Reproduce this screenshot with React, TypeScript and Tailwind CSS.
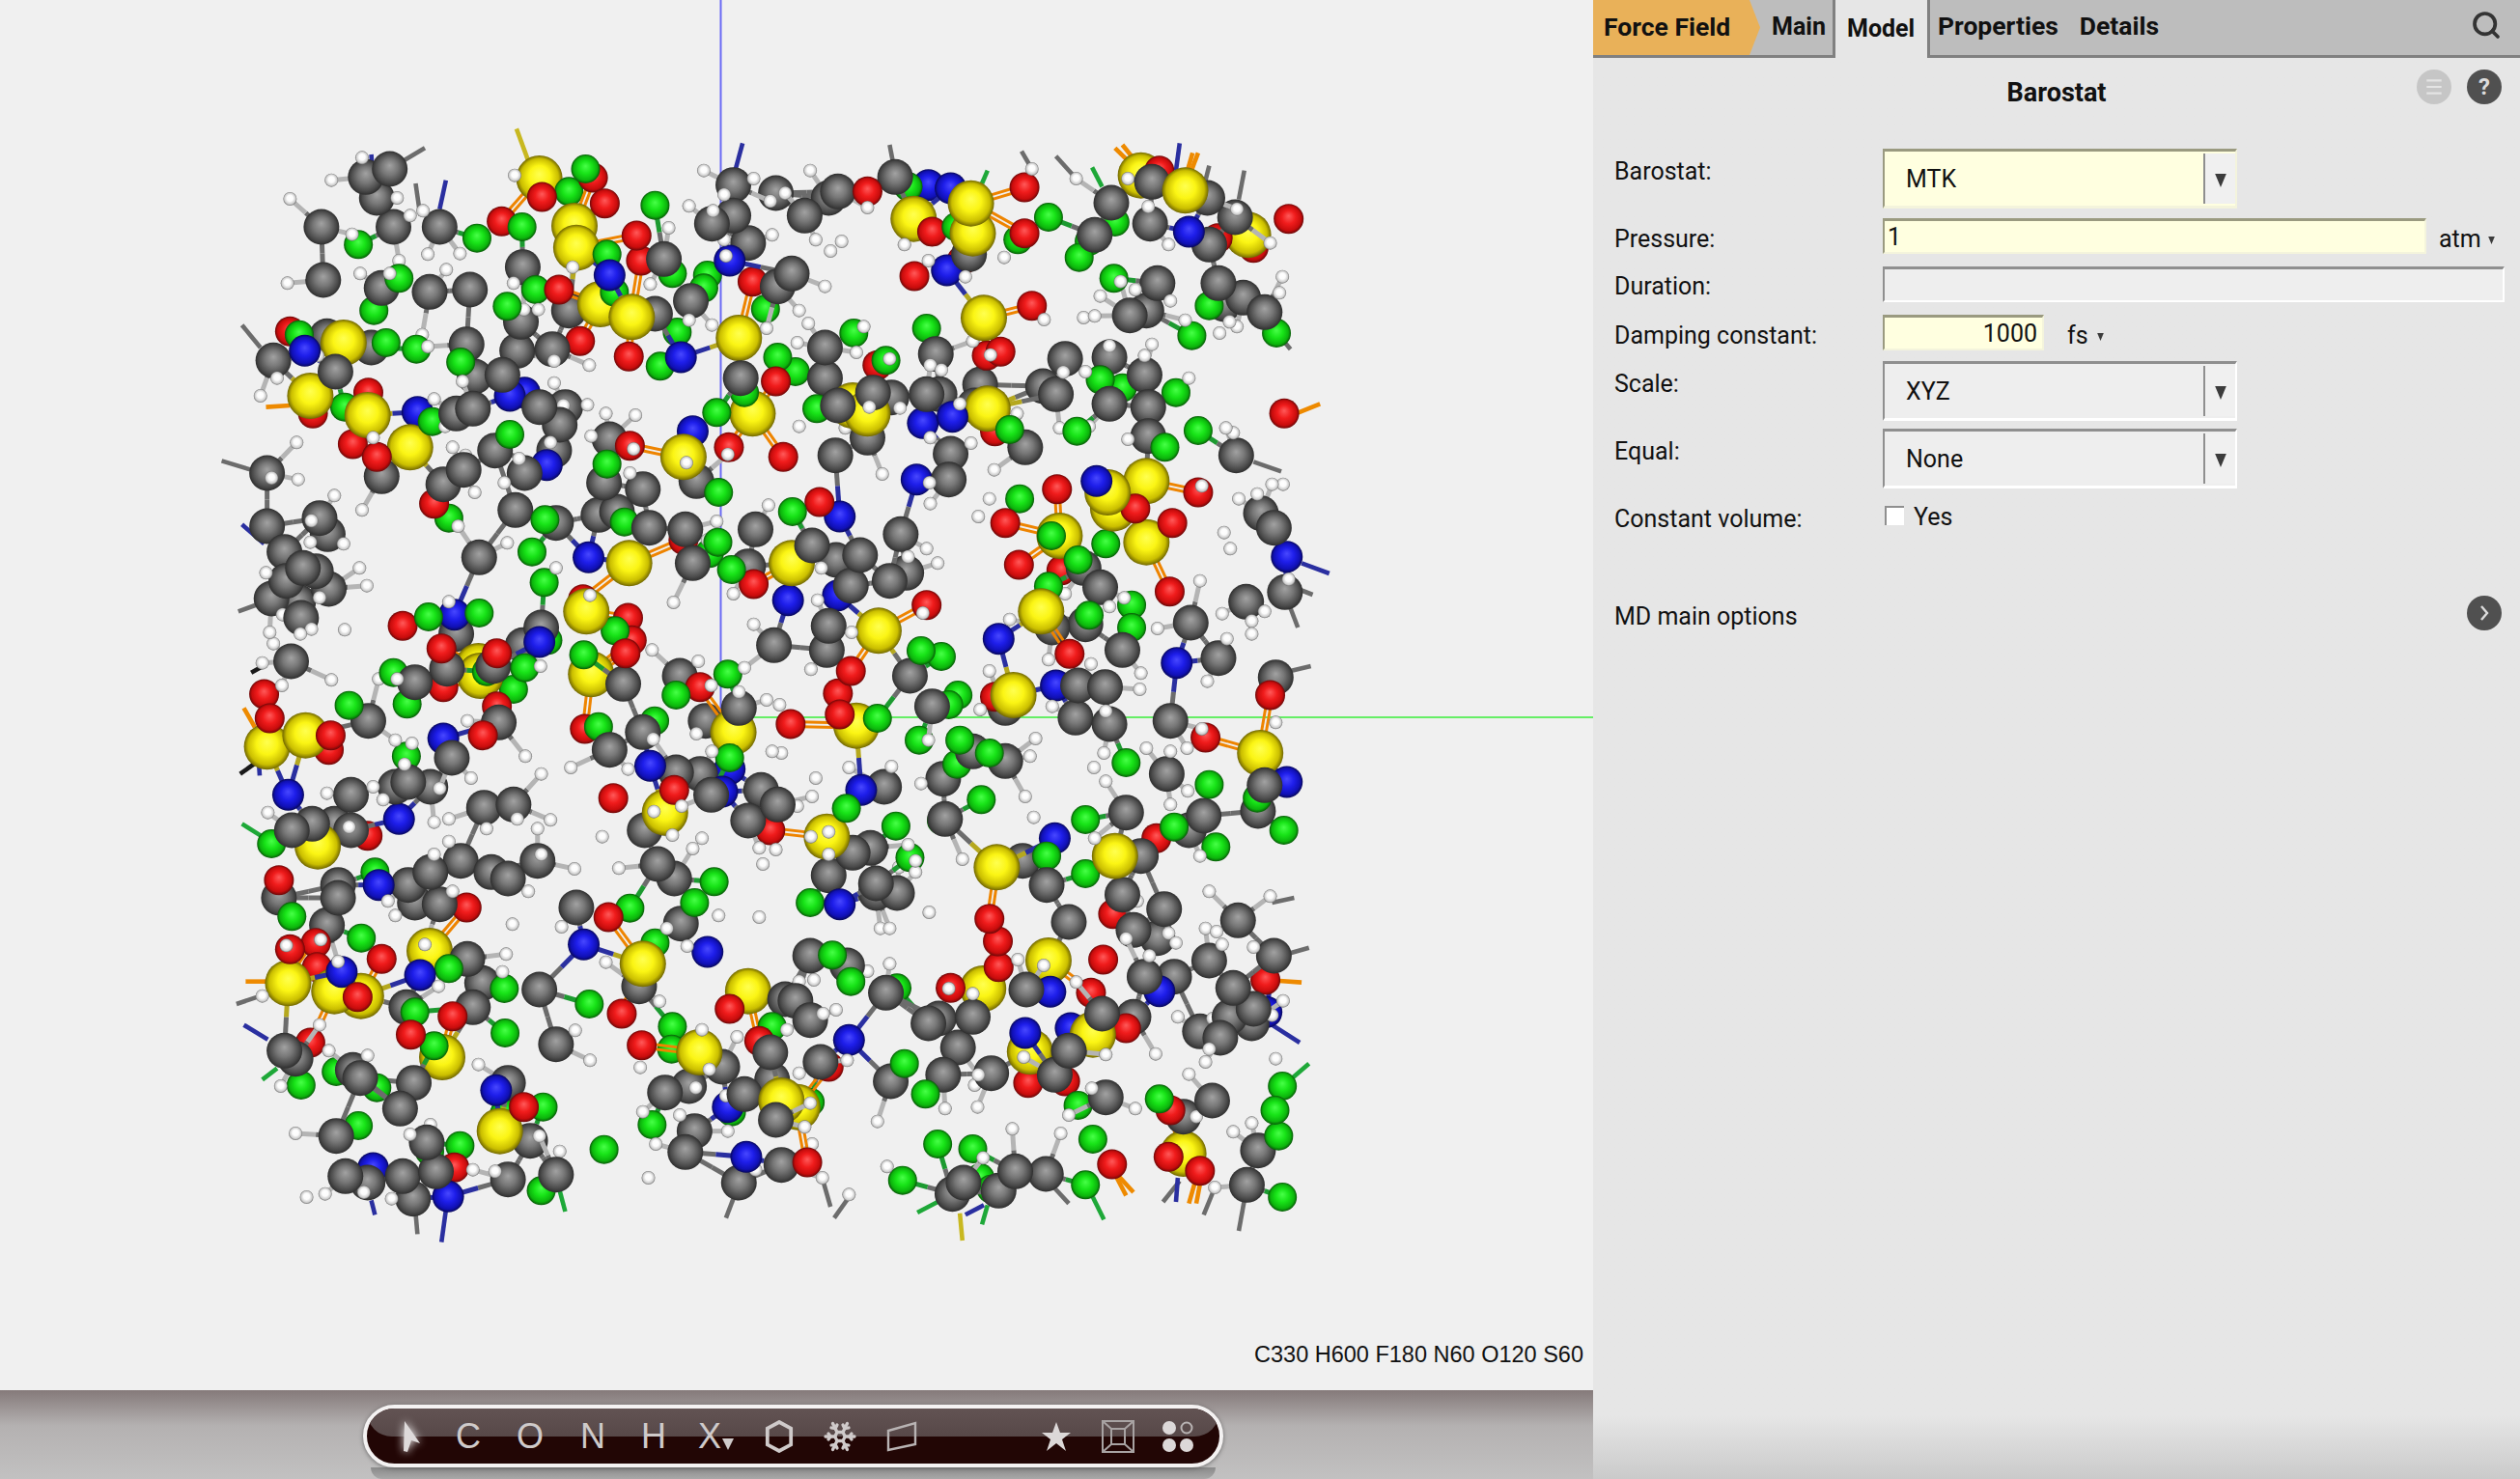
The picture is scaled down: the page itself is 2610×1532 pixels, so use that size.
import { useMemo } from 'react'
import { Search, Snowflake } from 'lucide-react'

type El = 'C' | 'F' | 'O' | 'S' | 'N' | 'H'

interface Tile {
  x: number
  y: number
  atoms: Record<El, string>
  stubs: string
}

const TILES: Tile[] = [
  {
    x: 220,
    y: 120,
    atoms: {
      C: '295,345 480,165 445,255 490,345 615,345 415,190 300,510 458,535 588,547 697,540 840,470 310,685 430,720 688,710 825,730 920,725 165,760 333,795 965,605 835,640 1222,445 1198,615 1295,575 1410,215 1352,335 1410,310 1450,395 1525,240 1530,530 660,925 705,910 710,810 785,805 885,905 955,905 940,960 925,1040 765,1040 845,1110 680,1100 625,1145 458,1120 148,1110 1075,1005 1060,1140 1165,1160 1310,1135 1430,815',
      F: '395,400 505,505 437,605 470,705 235,680 552,725 672,765 716,380 838,345 965,235 1010,165 875,540 798,592 1198,278 1068,430 1088,548 1258,672 1212,778 1340,495 1330,535 1245,490 1497,600 1530,750 1365,922 1440,860 805,990 358,905 595,950 1068,1082 1370,1170',
      O: '1030,192 1062,272 892,252 783,328 1148,372 1160,450 938,540 995,700 1127,748 1462,515 1525,825 210,670 422,860 272,925 380,1020 445,1060 1130,1025 1398,1030 1545,1060',
      S: '885,195 985,410 980,342 1050,585 1135,625 355,705 265,870 420,930 535,1030 1425,690 1462,925 1275,1060',
      N: '1075,495 250,730 555,920 805,870 845,860 905,1085 1268,750 1400,450 1300,980',
      H: '322,200 210,258 405,130 378,368 500,255 570,295 535,310 583,430 505,450 670,428 633,478 480,490 400,490 203,520 815,520 843,602 882,602 975,470 818,185 568,680 583,717 285,745 175,815 130,870 327,795 677,825 925,762 1020,775 925,830 1015,898 950,900 600,880 630,965 650,1030 685,1055 830,1065 915,1015 1065,925 1145,930 1025,995 1140,1035 1130,1110 228,1015 232,1130 330,1180 160,1125 1330,170 1290,280 1355,295 1385,245 1465,195 1235,348 1185,523 1290,635 1352,650 1500,660 1390,435 1510,265 1515,370 1550,240 1385,385 435,1000 1283,1078 1395,1052 790,1140 710,1170',
    },
    stubs: '575,100,480,165,g 823,40,855,140,y 430,120,435,210,n 632,200,615,290,n 1435,85,1415,170,n 80,650,130,720,g 25,1072,105,1100,g 550,210,560,290,g 145,905,210,900,o',
  },
  {
    x: 820,
    y: 120,
    atoms: {
      C: '100,255 125,235 280,190 35,310 865,270 970,335 1200,315 975,205 1130,400 1125,255 990,520 1155,520 915,620 960,605 1170,585 1222,565 1280,610 0,490 90,720 90,815 390,740 480,430 740,755 860,750 955,805 510,835 680,840 715,865 860,895 965,905 965,995 400,865 365,865 270,875 220,860 125,900 205,1000 118,1055 430,1050 425,1130 632,1030 1203,1055 820,370 495,900',
      F: '315,220 445,345 612,385 695,315 805,390 778,440 872,505 875,330 1130,590 1083,683 1312,675 365,660 168,675 255,760 10,795 68,910 835,820 895,845 1040,860 1100,978 590,975 772,980 1010,1030 617,1190',
      O: '205,235 630,222 380,360 630,365 332,498 460,450 1153,380 1250,410 1345,320 650,590 565,733 528,745 232,775 550,980 718,1160 1100,1170 1333,925 75,1200 995,170',
      S: '945,185 1065,232 1235,370 330,320 485,272 490,365 520,628 165,900 205,925 530,910 960,1135 855,1170',
      N: '370,215 430,225 1075,360 420,480 355,955 435,935 338,1130 825,1135 885,1170',
      H: '50,170 650,165 770,195 135,390 65,385 105,420 205,285 305,400 575,440 370,450 470,500 90,530 20,605 45,645 15,705 195,655 175,735 210,905 20,965 145,970 293,908 375,1000 455,895 580,958 610,925 265,755 375,775 405,790 490,700 538,743 683,633 735,797 795,795 860,715 975,710 955,745 1075,815 725,970 805,965 910,1005 790,627 820,622 835,560 930,540 890,515 1020,400 1205,290 1295,395 910,195 965,282 1025,575 1065,635 1158,675 1205,655 1185,640 1320,550 1328,500 1175,970 1195,985 485,1017 548,1100 245,1113 373,1140 535,1190 1110,1150 1210,1190 1260,1175 1300,1145 1330,1145',
    },
    stubs: '1050,85,1040,170,n 1225,170,1210,260,g 1350,725,1310,670,g 1085,115,1070,175,o 1100,115,1080,175,o 875,100,915,145,o 895,90,930,140,o 813,160,840,220,f 715,125,770,195,g 265,90,275,150,g 622,110,650,165,g 530,170,515,210,f 1130,155,1120,200,g 1430,895,1365,925,o 1325,1105,1250,1075,g',
  },
  {
    x: 220,
    y: 520,
    atoms: {
      C: '148,75 195,155 290,50 312,100 245,205 280,215 200,245 315,270 160,300 232,310 240,360 213,495 722,172 820,25 930,65 1045,40 1182,80 1280,85 1300,190 1470,85 1450,200 1095,30 660,410 840,445 890,390 635,518 548,560 760,510 422,680 775,685 648,795 1112,565 1265,540 1075,770 1165,715 1335,680 1425,640 1520,445 530,870 590,885 495,885 375,910 735,950 815,940 672,1115 755,1150 590,1150 880,1115 215,1020 270,1000 330,1000 375,1020 1170,1020 1255,840 1320,845 1350,910 1485,895 1450,990 1530,940 1205,1125 1250,1170 530,1190 340,1190 800,1170',
      F: '640,50 865,155 900,55 1115,62 1368,125 1405,210 1345,160 898,250 1570,30 585,357 722,345 908,430 1005,475 845,515 815,582 742,527 1395,535 490,530 527,628 370,632 1255,600 1045,698 1197,680 525,790 1400,795 160,1062 440,1150 1358,1180 1090,400',
      O: '600,5 515,385 1275,118 1465,255 1003,302 1125,360 1135,430 1118,470 620,455 625,575 770,635 140,597 155,672 320,725 315,770 732,725 1008,705 1320,575 1565,690 1085,920 1250,895 420,1037 180,1175 1510,1020 770,470',
      S: '1128,190 1012,340 720,510 725,540 1025,535 148,760 252,725 1410,715 1225,965 285,1070',
      N: '1018,172 655,350 885,435 625,735 505,985 205,910 1185,820 1400,830 1558,305 450,1190 1380,900',
      H: '418,260 398,205 355,130 268,58 405,25 265,125 145,220 315,240 290,297 190,350 155,405 165,440 238,410 268,395 358,397 135,500 322,553 188,570 798,127 930,205 665,75 1248,312 1340,118 1410,285 1365,60 1505,10 640,310 1022,290 1465,380 450,550 500,550 1190,460 1315,495 888,510 1440,515 1350,570 1425,590 1500,615 1535,630 847,790 690,680 495,740 540,750 520,815 700,858 890,845 970,825 1125,830 1193,737 1310,720 1352,775 1515,775 1540,780 435,885 310,905 462,925 615,890 600,995 825,985 640,985 742,1015 915,988 880,1015 640,1055 890,1095 980,1140 150,965 370,1010 1055,1040 1195,962 1270,945 1325,1045 1300,1077 1100,1138 1480,1075 1490,1125 1525,1080 600,1095 1245,1035',
    },
    stubs: '80,70,140,130,n 70,340,130,315,g 85,640,115,700,o 105,530,145,505,k 75,845,130,800,k 128,850,125,800,n 80,1000,135,1040,f',
  },
  {
    x: 820,
    y: 520,
    atoms: {
      C: '55,135 120,180 185,165 295,100 160,260 265,245 310,220 1305,80 1270,35 100,385 95,460 320,540 380,635 790,205 835,265 705,390 795,380 895,460 1080,375 1230,310 1335,280 1155,485 1310,545 775,570 848,575 578,640 768,670 860,690 1025,680 490,775 578,805 410,860 1015,845 250,885 415,985 905,965 1075,1020 1115,975 1262,960 1280,880 213,1075 165,1090 100,1160 228,1185 625,1115 690,1190 945,1100',
      F: '350,462 405,480 450,600 425,630 232,672 345,740 455,740 447,815 535,780 513,925 703,105 850,130 695,262 775,180 805,352 920,320 920,390 905,810 1130,878 1260,920 1332,1020 148,952 282,1007 405,990 795,987 1035,1010 1148,1072 320,1105 690,1100 795,1155',
      O: '70,15 578,65 1030,65 615,195 730,212 1023,278 365,320 752,472 160,525 125,595 130,660 5,690 550,605 1120,732 1295,600 987,1045 930,20',
      S: '725,105 960,125 675,340 235,400 0,190 600,600 175,695 1268,780 95,1040 555,1135 875,1100 870,20',
      N: '130,45 10,310 125,290 1340,170 560,425 1042,500 715,570 188,895 1340,870 712,1045',
      H: '15,50 375,5 505,45 365,145 345,135 395,190 315,170 80,205 70,305 125,395 162,405 355,345 52,520 1170,95 1187,145 1105,245 1165,347 1245,370 1245,410 1280,340 1345,240 590,365 740,285 860,325 900,298 990,393 1178,425 1125,557 695,490 810,503 535,525 945,532 942,582 510,645 705,635 850,650 660,735 1110,705 1025,775 1310,685 845,780 818,825 960,765 1070,765 645,790 632,915 370,740 850,868 1072,898 1025,940 1105,1100 155,825 270,822 350,875 65,858 55,915 15,945 52,1040 100,1025 100,1095 290,1135 315,1065 335,1115 335,1150 462,1110 655,980 820,1045',
    },
    stubs: '1405,510,1350,525,g 1455,222,1380,190,n 1410,288,1370,270,g 1370,390,1350,330,g',
  },
  {
    x: 220,
    y: 920,
    atoms: {
      C: '180,30 340,30 310,115 548,45 615,50 985,60 1268,110 690,220 730,295 885,315 705,370 525,370 1155,305 930,485 195,505 225,530 380,565 400,590 545,605 800,605 508,685 335,770 580,790 860,785 1290,615 1225,635 1380,555 1440,640 1515,595 1510,510 1525,720 1305,755 1280,820 1425,915 1540,860 605,880 515,895 360,895 420,915 543,965 800,905 930,890 1550,345',
      F: '215,88 403,155 1130,62 1305,45 1198,170 640,250 790,312 548,385 792,450 1020,360 1245,430 1243,500 600,490 240,612 335,570 445,620 395,738 670,800 588,818 895,680 1060,812 890,940 1190,735 1405,695 1515,430 790,700',
      O: '688,60 1072,90 210,190 280,170 283,245 458,220 393,338 650,398 537,455 265,480 843,680 655,868 1108,390 1162,488 1480,475 1400,375',
      S: '588,195 205,295 330,320 402,335 622,525 778,755 1165,235 1450,320 1318,510 1540,660',
      N: '445,10 350,260 562,270 1005,175 1340,198 768,628 435,870 638,958 1395,680 1445,835',
      H: '200,178 293,160 475,40 495,85 650,10 855,10 812,112 945,120 1480,90 1370,85 1230,125 1285,180 575,175 795,205 785,260 612,305 1065,230 1210,352 135,335 340,228 290,425 315,505 420,520 982,442 1022,535 720,548 1325,440 1420,462 1158,557 1345,563 1308,620 1390,645 185,615 1165,695 1265,705 1200,795 590,735 535,765 225,762 885,770 940,818 705,875 765,880 378,908 255,960 305,950 410,945 485,965 1180,900 1395,755 1555,440 1470,875',
    },
    stubs: '85,425,150,470,n 135,595,175,560,f 65,360,130,335,g 90,290,150,290,o 555,1075,550,1010,g 620,1100,632,1000,n 440,1015,430,970,n 955,1005,940,940,f 1390,1025,1410,965,g',
  },
  {
    x: 820,
    y: 920,
    atoms: {
      C: '50,210 150,240 255,325 10,350 50,410 78,540 228,15 285,15 685,15 750,105 895,20 925,130 1008,65 990,155 1208,100 1305,210 1130,225 1195,310 955,275 1035,275 1250,375 1245,420 1185,400 1105,445 1160,465 635,315 398,405 370,420 490,400 450,495 840,390 925,400 750,505 410,580 540,575 712,580 268,600 850,650 1060,710 1138,660 1262,815 1232,922 605,880 688,888 435,950 560,940 465,915',
      F: '50,45 110,208 160,290 285,310 305,545 362,640 50,665 775,675 995,655 815,780 395,795 490,810 300,908 510,900 540,935 795,922 1328,615 1308,690 1318,770 1328,960',
      O: '535,95 558,165 560,245 843,222 870,80 430,310 810,325 640,605 905,435 1025,690 867,858 1282,285 1105,878 1020,835 42,852 100,555 740,600',
      S: '695,225 518,312 645,508 815,455 1060,825 15,680',
      N: '130,50 155,472 700,322 995,320 755,435 632,450 1285,385',
      H: '372,75 240,125 265,125 265,235 205,258 120,378 85,390 20,290 60,285 150,535 20,575 935,40 1130,10 1295,25 1120,125 1150,135 1020,140 1040,170 905,157 1165,175 1250,183 968,210 770,292 612,222 682,240 1330,350 425,312 490,328 1045,400 1300,395 1140,405 850,517 985,515 1310,530 628,525 505,580 495,612 1120,540 1130,500 1075,578 812,622 232,725 415,685 503,680 750,705 930,685 1095,710 1245,730 1195,757 597,748 728,762 258,865 518,838 35,742 50,668 55,795 83,900 155,952 1145,930',
    },
    stubs: '1400,545,1350,595,f 1400,185,1340,205,g 1380,293,1320,288,o 1375,480,1300,425,n 1210,1065,1225,970,g 845,1030,815,960,f 925,945,885,895,o 905,955,880,900,o 462,1095,455,1010,y 340,1008,395,975,f 750,980,710,930,g 115,1025,155,960,g 105,990,85,910,g 1005,975,1050,910,g 1040,975,1045,900,n 1075,980,1090,920,o 1095,980,1105,920,o 1115,1015,1140,945,g 515,1045,530,985,f 470,1015,520,985,n 1360,30,1300,45,g',
  },
]

const RADIUS: Record<El, number> = { C: 18.5, S: 24, F: 15, O: 15.5, N: 16.5, H: 7 }
const MAX_BONDS: Record<El, number> = { C: 4, S: 4, F: 1, O: 1, N: 3, H: 1 }
const STICK: Record<El, string> = { C: '#6c6c6c', S: '#b5a81e', F: '#1c9a30', O: '#e8500c', N: '#2a2fa0', H: '#b4b4b4' }
const STUB: Record<string, string> = { g: '#6c6c6c', y: '#c8b820', n: '#2a2fa0', o: '#ee8a00', f: '#1ea838', k: '#1a1a1a' }
const BOND_LIMIT: Record<string, number> = {
  CC: 66, CH: 46, CF: 64, CN: 70, NS: 74, OS: 74, CS: 78,
}

const SCALE_X = 600 / 1568

interface Atom {
  el: El
  x: number
  y: number
  z: number
}

type Item =
  | { kind: 'atom'; z: number; atom: Atom }
  | { kind: 'bond'; z: number; a: Atom; b: Atom; d: number }
  | { kind: 'stub'; z: number; x1: number; y1: number; x2: number; y2: number; c: string }

function toX(t: Tile, v: number) {
  return t.x + v * SCALE_X
}

function toY(t: Tile, v: number) {
  return t.y + v / 3
}

function noise(a: number, b: number) {
  return Math.abs(Math.sin(a * 12.9898 + b * 78.233) * 43758.5453) % 1
}

function buildScene(): Item[] {
  const atoms: Atom[] = []
  for (const t of TILES) {
    for (const el of Object.keys(t.atoms) as El[]) {
      for (const pair of t.atoms[el].split(' ')) {
        const [px, py] = pair.split(',').map(Number)
        const x = toX(t, px)
        const y = toY(t, py)
        if (atoms.some((a) => a.el === el && Math.hypot(a.x - x, a.y - y) < 9)) continue
        atoms.push({ el, x, y, z: noise(px, py) + (el === 'H' ? 0.5 : 0) })
      }
    }
  }
  const pairs: { a: number; b: number; d: number }[] = []
  for (let i = 0; i < atoms.length; i++) {
    for (let j = i + 1; j < atoms.length; j++) {
      const key = [atoms[i].el, atoms[j].el].sort().join('')
      const limit = BOND_LIMIT[key]
      if (!limit) continue
      const d = Math.hypot(atoms[i].x - atoms[j].x, atoms[i].y - atoms[j].y)
      if (d < limit && d > 14) pairs.push({ a: i, b: j, d })
    }
  }
  pairs.sort((p, q) => p.d - q.d)
  const degree = atoms.map(() => 0)
  const items: Item[] = atoms.map((atom) => ({ kind: 'atom', z: atom.z, atom }))
  for (const p of pairs) {
    const a = atoms[p.a]
    const b = atoms[p.b]
    if (degree[p.a] >= MAX_BONDS[a.el] || degree[p.b] >= MAX_BONDS[b.el]) continue
    degree[p.a]++
    degree[p.b]++
    items.push({ kind: 'bond', z: Math.min(a.z, b.z) - 0.001, a, b, d: p.d })
  }
  for (const t of TILES) {
    for (const s of t.stubs.split(' ')) {
      const [x1, y1, x2, y2, c] = s.split(',')
      items.push({
        kind: 'stub',
        z: -1,
        x1: toX(t, Number(x1)),
        y1: toY(t, Number(y1)),
        x2: toX(t, Number(x2)),
        y2: toY(t, Number(y2)),
        c,
      })
    }
  }
  return items.sort((p, q) => p.z - q.z)
}

function Ball({ id, hi, mid, lo, edge }: { id: string; hi: string; mid: string; lo: string; edge: string }) {
  return (
    <radialGradient id={id} cx="50%" cy="50%" r="50%" fx="50%" fy="40%">
      <stop offset="0%" stopColor={hi} />
      <stop offset="45%" stopColor={mid} />
      <stop offset="82%" stopColor={lo} />
      <stop offset="100%" stopColor={edge} />
    </radialGradient>
  )
}

function SceneItem({ item }: { item: Item }) {
  if (item.kind === 'atom') {
    const a = item.atom
    return <circle cx={a.x} cy={a.y} r={RADIUS[a.el]} fill={`url(#ball-${a.el})`} />
  }
  if (item.kind === 'stub') {
    return <line x1={item.x1} y1={item.y1} x2={item.x2} y2={item.y2} stroke={STUB[item.c]} strokeWidth="4.6" />
  }
  const { a, b, d } = item
  if (a.el === 'O' || b.el === 'O') {
    const nx = ((b.y - a.y) / d) * 2.4
    const ny = (-(b.x - a.x) / d) * 2.4
    return (
      <g stroke="#ee8400" strokeWidth="3">
        <line x1={a.x + nx} y1={a.y + ny} x2={b.x + nx} y2={b.y + ny} />
        <line x1={a.x - nx} y1={a.y - ny} x2={b.x - nx} y2={b.y - ny} />
      </g>
    )
  }
  const mx = (a.x + b.x) / 2
  const my = (a.y + b.y) / 2
  return (
    <g strokeWidth="5">
      <line x1={a.x} y1={a.y} x2={mx} y2={my} stroke={STICK[a.el]} />
      <line x1={mx} y1={my} x2={b.x} y2={b.y} stroke={STICK[b.el]} />
    </g>
  )
}

function Molecule() {
  const items = useMemo(buildScene, [])
  return (
    <svg viewBox="0 0 1650 1440" className="block w-full h-full">
      <defs>
        <Ball id="ball-C" hi="#a2a2a2" mid="#787878" lo="#4a4a4a" edge="#2e2e2e" />
        <Ball id="ball-S" hi="#ffff50" mid="#fbf514" lo="#cabe00" edge="#706600" />
        <Ball id="ball-F" hi="#48ff48" mid="#18e418" lo="#0cb40c" edge="#085a08" />
        <Ball id="ball-O" hi="#ff5a5a" mid="#f01c1c" lo="#c80c0c" edge="#6c0808" />
        <Ball id="ball-N" hi="#4848ff" mid="#1e1eea" lo="#1010b4" edge="#08085a" />
        <Ball id="ball-H" hi="#ffffff" mid="#fcfcfc" lo="#cccccc" edge="#707070" />
      </defs>
      <line x1="746.5" y1="0" x2="746.5" y2="745" stroke="#6a6af5" strokeWidth="2" />
      <line x1="746" y1="743" x2="1650" y2="743" stroke="#66ee66" strokeWidth="2" />
      {items.map((item, i) => (
        <SceneItem key={i} item={item} />
      ))}
    </svg>
  )
}

function Triangle({ className }: { className: string }) {
  return (
    <svg viewBox="0 0 10 12" className={className}>
      <polygon points="0,0 10,0 5,12" fill="#3c3c3c" />
    </svg>
  )
}

function SelectBox({ value, active }: { value: string; active?: boolean }) {
  return (
    <div
      className={`flex h-[62px] w-[367px] border-t-[3px] border-l-[2px] border-b-[3px] border-r-[2px] ${
        active
          ? 'bg-[#ffffe0] border-t-[#9a9a80] border-l-[#9a9a80] border-b-[#f4f4dc] border-r-[#f4f4dc]'
          : 'bg-[#eeeeee] border-t-[#8f8f8f] border-l-[#8f8f8f] border-b-white border-r-white'
      }`}
    >
      <div className="flex flex-1 items-center pl-[22px] pt-[1px] text-[25px] text-[#111]">{value}</div>
      <div className="my-[2px] flex w-[33px] items-center justify-center border-l-[2px] border-[#8f8f8f] bg-[#f0f0f0]">
        <Triangle className="mt-[3px] h-[14px] w-[12px]" />
      </div>
    </div>
  )
}

function Row({ label, pad, children, gap }: { label: string; pad: string; children: React.ReactNode; gap: string }) {
  return (
    <div className={`flex items-start ${gap}`}>
      <div className={`w-[300px] shrink-0 pl-[22px] text-[25px] leading-[28px] text-[#111] ${pad}`}>{label}</div>
      {children}
    </div>
  )
}

function TextInput({ width, value, active, right }: { width: string; value?: string; active?: boolean; right?: boolean }) {
  return (
    <div
      className={`flex h-[37px] items-center border-t-[3px] border-l-[2px] border-b-[2px] border-r-[2px] pt-[1px] text-[25px] leading-none text-[#111] ${width} ${
        active
          ? 'bg-[#ffffe0] border-t-[#9a9a80] border-l-[#9a9a80] border-b-[#f4f4dc] border-r-[#f4f4dc]'
          : 'bg-[#eeeeee] border-t-[#8f8f8f] border-l-[#8f8f8f] border-b-white border-r-white'
      } ${right ? 'justify-end pr-[5px]' : 'pl-[3px]'}`}
    >
      {value}
    </div>
  )
}

function Tabs() {
  return (
    <div className="flex h-[60px] shrink-0 bg-[#bdbdbd] text-[25px] font-bold leading-none text-[#111]">
      <div className="h-[60px] w-[173px] border-b-[3px] border-[#808080]">
        <div className="flex h-[57px] w-[173px] items-center bg-[#e9b159] pl-[11px] text-[26.5px] [clip-path:polygon(0_0,162px_0,173px_50%,162px_100%,0_100%)]">
          Force Field
        </div>
      </div>
      <div className="flex h-[60px] w-[78px] items-center border-r-[3px] border-b-[3px] border-[#808080] pb-[2px] pl-[12px]">Main</div>
      <div className="flex h-[60px] w-[95px] items-center bg-[#e6e6e6] pb-[2px] pl-[12px]">Model</div>
      <div className="flex h-[60px] flex-1 items-center border-l-[3px] border-b-[3px] border-[#808080] pb-[2px] pl-[8px] text-[26.5px]">
        <span className="mr-[22px]">Properties</span>
        <span>Details</span>
        <Search className="ml-auto mr-[19px] mb-[4px] h-[32px] w-[32px] text-[#333]" strokeWidth={2.8} />
      </div>
    </div>
  )
}

function RoundIcon({ className, children }: { className: string; children: React.ReactNode }) {
  return <div className={`flex h-[36px] w-[36px] items-center justify-center rounded-full ${className}`}>{children}</div>
}

function SidePanel() {
  return (
    <div className="flex h-full w-[960px] shrink-0 flex-col bg-gradient-to-b from-[#e6e6e6] from-[95.7%] to-[#cacaca] font-['Roboto',sans-serif]">
      <Tabs />
      <div className="grid h-[94px] shrink-0 grid-cols-[1fr_auto_1fr]">
        <div />
        <div className="mt-[22px] text-[27px] font-bold leading-[28px] text-[#111]">Barostat</div>
        <div className="mt-[12px] flex justify-end gap-[16px] pr-[19px]">
          <RoundIcon className="bg-[#c6c6c6]">
            <svg viewBox="0 0 20 20" className="h-[22px] w-[22px]" stroke="#e4e4e4" strokeWidth="2">
              <path d="M3 4h14M3 10h14M3 16h14" />
            </svg>
          </RoundIcon>
          <RoundIcon className="bg-[#505050] text-[24px] font-bold text-[#dcdcdc]">?</RoundIcon>
        </div>
      </div>
      <div className="flex flex-col">
        <Row label="Barostat:" pad="pt-[10px]" gap="mb-[10px]">
          <SelectBox value="MTK" active />
        </Row>
        <Row label="Pressure:" pad="pt-[8px]" gap="mb-[13px]">
          <TextInput width="w-[563px]" value="1" active />
          <span className="ml-[13px] mt-[8px] flex items-center text-[25px] leading-[28px] text-[#111]">
            atm
            <Triangle className="ml-[7px] mt-[2px] h-[8px] w-[7px]" />
          </span>
        </Row>
        <Row label="Duration:" pad="pt-[7px]" gap="mb-[13px]">
          <TextInput width="w-[644px]" />
        </Row>
        <Row label="Damping constant:" pad="pt-[8px]" gap="mb-[11px]">
          <TextInput width="w-[167px]" value="1000" active right />
          <span className="ml-[24px] mt-[8px] flex items-center text-[25px] leading-[28px] text-[#111]">
            fs
            <Triangle className="ml-[9px] mt-[2px] h-[8px] w-[7px]" />
          </span>
        </Row>
        <Row label="Scale:" pad="pt-[10px]" gap="mb-[8px]">
          <SelectBox value="XYZ" />
        </Row>
        <Row label="Equal:" pad="pt-[10px]" gap="mb-[18px]">
          <SelectBox value="None" />
        </Row>
        <Row label="Constant volume:" pad="pt-0" gap="mb-[60px]">
          <div className="ml-[2px] flex items-start">
            <div className="h-[20px] w-[20px] border-t-[2px] border-l-[2px] border-[#8f8f8f] bg-white" />
            <span className="ml-[10px] text-[25px] leading-[24px] text-[#111]">Yes</span>
          </div>
        </Row>
        <div className="flex items-center justify-between pl-[22px] pr-[19px] text-[25px] text-[#111]">
          <span className="mt-[8px]">MD main options</span>
          <RoundIcon className="bg-[#505050]">
            <svg viewBox="0 0 20 20" className="h-[20px] w-[20px]" fill="none" stroke="#dcdcdc" strokeWidth="2.4">
              <path d="M7 3l6 7-6 7" />
            </svg>
          </RoundIcon>
        </div>
      </div>
    </div>
  )
}

const LETTER = "relative flex items-center justify-center font-['Liberation_Sans',sans-serif] text-[36px] leading-none text-[#cfcaca]"
const CELL = 'relative flex items-center justify-center'

function Toolbar() {
  return (
    <div className="relative h-[92px] shrink-0 bg-gradient-to-b from-[#857a7a] via-[#b4b1b1] via-40% to-[#c2c1c1] pt-[15px] pl-[376px]">
      <div className="absolute left-[384px] top-[80px] h-[12px] w-[875px] rounded-b-[30px] bg-gradient-to-b from-[#8a8a8a] to-[#a8a8a8]" />
      <div className="relative flex h-[65px] w-[891px] overflow-hidden rounded-full border-[4px] border-[#f4f2f2] bg-[#220605] pl-[16px] pr-[12px] shadow-[0_1px_4px_rgba(60,60,60,0.6)]">
        <div className="absolute inset-x-0 top-0 h-[29px] rounded-b-[26px] bg-gradient-to-b from-[#625353] to-[#574848]" />
        <div className={`w-[58px] ${CELL}`}>
          <svg viewBox="0 0 24 36" className="h-[36px] w-[24px] drop-shadow-[0_0_5px_#ffffff]">
            <polygon points="6,2 22,25 13,22 9,34 5,33" fill="#dedada" />
          </svg>
        </div>
        <div className={`w-[62px] ${LETTER}`}>C</div>
        <div className={`w-[66px] ${LETTER}`}>O</div>
        <div className={`w-[64px] ${LETTER}`}>N</div>
        <div className={`w-[62px] ${LETTER}`}>H</div>
        <div className={`w-[67px] ${LETTER}`}>
          X
          <svg viewBox="0 0 12 12" className="ml-[1px] mt-[16px] h-[12px] w-[12px]">
            <polygon points="0,0 12,0 6,12" fill="#cfcaca" />
          </svg>
        </div>
        <div className={`w-[63px] ${CELL}`}>
          <svg viewBox="0 0 32 36" className="h-[34px] w-[30px]" fill="none" stroke="#cfcaca" strokeWidth="4">
            <polygon points="16,2 29,9 29,27 16,34 3,27 3,9" />
          </svg>
        </div>
        <div className={`w-[64px] ${CELL}`}>
          <Snowflake className="h-[36px] w-[36px] text-[#cfcaca]" strokeWidth={2.2} />
        </div>
        <div className={`w-[64px] ${CELL}`}>
          <svg viewBox="0 0 32 32" className="h-[32px] w-[32px]" fill="none" stroke="#b8b3b3" strokeWidth="2.4">
            <polygon points="2,10 30,2 30,24 2,30" />
          </svg>
        </div>
        <div className="flex-1" />
        <div className={`w-[64px] ${CELL}`}>
          <svg viewBox="0 0 32 32" className="h-[32px] w-[32px]">
            <polygon points="16,1 20,12 31,12 22,19 26,31 16,23 6,31 10,19 1,12 12,12" fill="#dcd8d8" />
          </svg>
        </div>
        <div className={`w-[63px] ${CELL}`}>
          <svg viewBox="0 0 34 34" className="h-[34px] w-[34px]" fill="none" stroke="#a8a3a3" strokeWidth="2">
            <rect x="1" y="1" width="32" height="32" />
            <path d="M1 1l9 8h14l9-8M1 33l9-8h14l9 8M10 9v16M24 9v16" />
          </svg>
        </div>
        <div className={`w-[62px] ${CELL}`}>
          <svg viewBox="0 0 34 34" className="h-[34px] w-[34px]">
            <circle cx="8" cy="8" r="7" fill="#dcd8d8" />
            <circle cx="26" cy="8" r="5.5" fill="none" stroke="#b8b3b3" strokeWidth="2" />
            <circle cx="8" cy="26" r="7" fill="#dcd8d8" />
            <circle cx="26" cy="26" r="7" fill="#dcd8d8" />
          </svg>
        </div>
      </div>
    </div>
  )
}

export default function App() {
  return (
    <div className="flex h-[1532px] w-[2610px] overflow-hidden">
      <div className="flex h-full w-[1650px] shrink-0 flex-col bg-[#f0f0f0]">
        <div className="relative flex-1">
          <Molecule />
          <div className="absolute bottom-[25px] right-[10px] font-['Liberation_Sans',sans-serif] text-[23.5px] leading-none text-[#111]">
            C330 H600 F180 N60 O120 S60
          </div>
        </div>
        <Toolbar />
      </div>
      <SidePanel />
    </div>
  )
}
